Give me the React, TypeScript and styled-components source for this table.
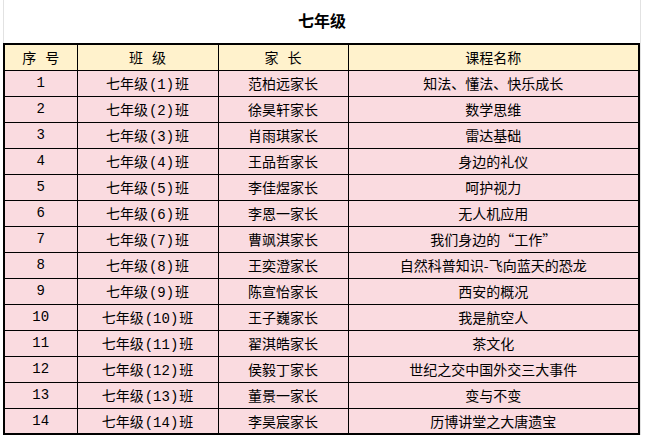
import styled, { createGlobalStyle } from "styled-components";

const GlobalStyle = createGlobalStyle`
  html, body {
    margin: 0;
    padding: 0;
    background: #fff;
  }
  body {
    font-family: "Noto Sans CJK SC", "Noto Sans", sans-serif;
    color: #000;
  }
`;

type Row = {
  no: number;
  parent: string;
  course: string;
};

const rows: Row[] = [
  { no: 1, parent: "范柏远家长", course: "知法、懂法、快乐成长" },
  { no: 2, parent: "徐昊轩家长", course: "数学思维" },
  { no: 3, parent: "肖雨琪家长", course: "雷达基础" },
  { no: 4, parent: "王品哲家长", course: "身边的礼仪" },
  { no: 5, parent: "李佳煜家长", course: "呵护视力" },
  { no: 6, parent: "李恩一家长", course: "无人机应用" },
  { no: 7, parent: "曹飒淇家长", course: "我们身边的“工作”" },
  { no: 8, parent: "王奕澄家长", course: "自然科普知识-飞向蓝天的恐龙" },
  { no: 9, parent: "陈宣怡家长", course: "西安的概况" },
  { no: 10, parent: "王子巍家长", course: "我是航空人" },
  { no: 11, parent: "翟淇皓家长", course: "茶文化" },
  { no: 12, parent: "侯毅丁家长", course: "世纪之交中国外交三大事件" },
  { no: 13, parent: "董景一家长", course: "变与不变" },
  { no: 14, parent: "李昊宸家长", course: "历博讲堂之大唐遗宝" },
];

const App = () => {
  return (
    <>
      <GlobalStyle />
      <Sheet>
        <TitleBar>七年级</TitleBar>
        <Table>
          <colgroup>
            <col style={{ width: 73 }} />
            <col style={{ width: 141 }} />
            <col style={{ width: 130 }} />
            <col />
          </colgroup>
          <thead>
            <HeadRow>
              <HeadCell>序 号</HeadCell>
              <HeadCell>班 级</HeadCell>
              <HeadCell>家 长</HeadCell>
              <HeadCell>课程名称</HeadCell>
            </HeadRow>
          </thead>
          <tbody>
            {rows.map((r) => (
              <BodyRow key={r.no}>
                <Cell $mono>{r.no}</Cell>
                <Cell>
                  七年级<Paren>({r.no})</Paren>班
                </Cell>
                <Cell>{r.parent}</Cell>
                <Cell>{r.course}</Cell>
              </BodyRow>
            ))}
          </tbody>
        </Table>
      </Sheet>
    </>
  );
};

const Sheet = styled.div`
  margin-left: 3px;
  border-left: 1px solid #e2e2e2;
  border-right: 1px solid #e2e2e2;
  box-sizing: border-box;
  width: 638px;
`;

const TitleBar = styled.div`
  height: 43px;
  display: flex;
  align-items: center;
  justify-content: center;
  font-size: 16px;
  font-weight: 700;
  padding-bottom: 4px;
  box-sizing: border-box;
`;

const Table = styled.table`
  width: 637px;
  margin-left: -1px;
  border-collapse: collapse;
  table-layout: fixed;
  border: 2px solid #000;
`;

const HeadRow = styled.tr`
  height: 26px;
  background: #fff2cc;
`;

const HeadCell = styled.th`
  border: 1px solid #000;
  font-size: 14px;
  font-weight: 400;
  text-align: center;
  padding: 0;
  word-spacing: 6px;
  white-space: pre;
`;

const BodyRow = styled.tr`
  height: 26px;
  background: #fadbe0;
`;

const Cell = styled.td<{ $mono?: boolean }>`
  border: 1px solid #000;
  font-size: 14px;
  text-align: center;
  padding: 0;
  white-space: nowrap;
  font-family: ${(p) =>
    p.$mono
      ? `"Liberation Mono", "Noto Sans CJK SC", monospace`
      : `"Noto Sans CJK SC", sans-serif`};
`;

const Paren = styled.span`
  font-family: "Liberation Mono", "Noto Sans CJK SC", monospace;
  margin: 0 1px;
`;

export default App;
